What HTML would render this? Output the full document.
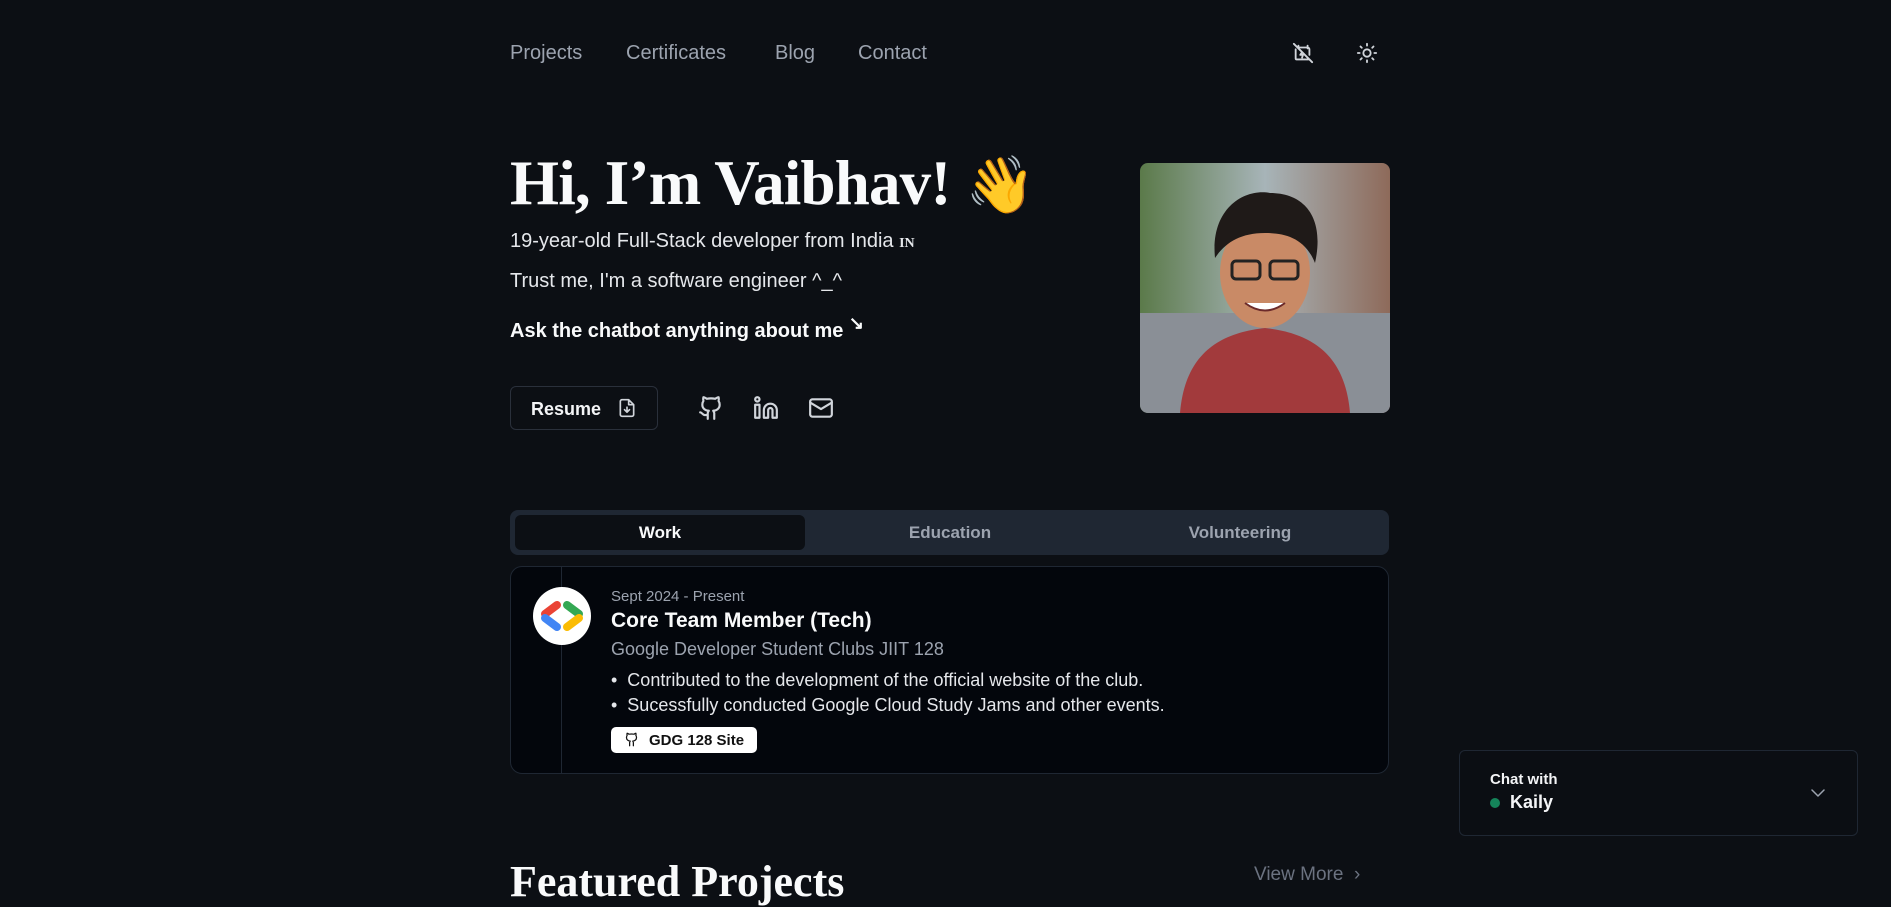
<!DOCTYPE html>
<html><head><meta charset="utf-8"><style>
*{margin:0;padding:0;box-sizing:border-box}
body{width:1891px;height:875px;overflow:hidden;background:#0c0f14;font-family:"Liberation Sans",sans-serif;color:#f3f4f6;position:relative}
.a{position:absolute}
.nav a{position:absolute;top:42px;font-size:20px;color:#9ca3af;text-decoration:none}
h1{position:absolute;left:510px;top:140px;font-family:"Liberation Serif",serif;font-weight:bold;font-size:63px;letter-spacing:-0.8px;color:#f9fafb;white-space:nowrap}
.t{position:absolute;left:510px;font-size:20px;color:#e5e7eb;white-space:nowrap}
svg.i{position:absolute;fill:none;stroke:#d1d5db;stroke-width:2;stroke-linecap:round;stroke-linejoin:round}
</style></head><body>
<div class="nav">
<a style="left:510px">Projects</a><a style="left:626px">Certificates</a><a style="left:775px">Blog</a><a style="left:858px">Contact</a>
</div>
<svg class="i" style="left:1292px;top:42px" width="22" height="22" viewBox="0 0 24 24" stroke="#e5e7eb"><path d="M2 2l20 20M8 6h9a2 2 0 0 1 2 2v6M4 8v10a1 1 0 0 0 1 1h13M7 4v3M17 4v3M11 11l-2 3h3l-1 3"/></svg>
<svg class="i" style="left:1356px;top:42px" width="22" height="22" viewBox="0 0 24 24" stroke="#e5e7eb"><circle cx="12" cy="12" r="4"/><path d="M12 2v2M12 20v2M4.9 4.9l1.4 1.4M17.7 17.7l1.4 1.4M2 12h2M20 12h2M4.9 19.1l1.4-1.4M17.7 6.3l1.4-1.4"/></svg>
<h1>Hi, I’m Vaibhav! <span style="font-family:'Noto Sans CJK JP',sans-serif;font-size:56px">👋</span></h1>
<div class="t" style="top:230px">19-year-old Full-Stack developer from India <b style="font-size:14px;font-family:'Liberation Serif',serif">IN</b></div>
<div class="t" style="top:270px">Trust me, I'm a software engineer ^_^</div>
<div class="t" style="top:320px;font-weight:bold;color:#f9fafb">Ask the chatbot anything about me <span style="font-size:18px;position:relative;top:-8px">↘</span></div>
<div class="a" style="left:510px;top:386px;width:148px;height:44px;border:1px solid #2a303b;border-radius:6px;font-size:18px;font-weight:bold;padding:12px 0 0 20px">Resume</div>
<svg class="i" style="left:617px;top:397px" width="20" height="22" viewBox="0 0 24 24"><path d="M14 2H6a2 2 0 0 0-2 2v16a2 2 0 0 0 2 2h12a2 2 0 0 0 2-2V8z M14 2v6h6M12 11v6M9 14l3 3 3-3"/></svg>
<svg class="i" style="left:698px;top:395px" width="26" height="26" viewBox="0 0 24 24"><path d="M15 22v-4a4.8 4.8 0 0 0-1-3.5c3 0 6-2 6-5.5.08-1.25-.27-2.48-1-3.5.28-1.150.28-2.35 0-3.5 0 0-1 0-3 1.5-2.64-.5-5.36-.5-8 0C6 2 5 2 5 2c-.3 1.15-.3 2.35 0 3.5A5.4 5.4 0 0 0 4 9c0 3.5 3 5.5 6 5.5-.39.49-.68 1.05-.85 1.65-.17.6-.22 1.23-.15 1.850v4M9 18c-4.5 2-5-2-7-2"/></svg>
<svg class="i" style="left:753px;top:395px" width="26" height="26" viewBox="0 0 24 24"><path d="M16 8a6 6 0 0 1 6 6v7h-4v-7a2 2 0 0 0-4 0v7h-4v-7a6 6 0 0 1 6-6zM2 9h4v12H2z"/><circle cx="4" cy="4" r="2"/></svg>
<svg class="i" style="left:808px;top:395px" width="26" height="26" viewBox="0 0 24 24"><rect x="2" y="4" width="20" height="16" rx="2"/><path d="M22 7l-10 6L2 7"/></svg>
<svg class="a" style="left:1140px;top:163px;border-radius:8px" width="250" height="250" viewBox="0 0 250 250">
<defs><linearGradient id="bg" x1="0" x2="1"><stop offset="0" stop-color="#5b7a4a"/><stop offset=".5" stop-color="#a7b4b8"/><stop offset="1" stop-color="#8e6a5a"/></linearGradient></defs>
<rect width="250" height="250" fill="url(#bg)"/><rect x="0" y="150" width="250" height="100" fill="#8a8f96"/>
<path d="M40 250c5-60 40-80 85-85 45 5 80 25 85 85z" fill="#a23a3c"/>
<ellipse cx="125" cy="110" rx="45" ry="55" fill="#c98a66"/>
<path d="M75 95c-5-50 30-70 55-65 35 0 55 25 45 70-10-25-30-30-50-30-25 0-40 10-50 25z" fill="#1f1a18"/>
<rect x="92" y="98" width="28" height="18" rx="4" fill="none" stroke="#222" stroke-width="3"/><rect x="130" y="98" width="28" height="18" rx="4" fill="none" stroke="#222" stroke-width="3"/>
<path d="M105 140q20 15 40 0" fill="#fff" stroke="#6b2a2a" stroke-width="2"/>
</svg>
<div class="a" style="left:510px;top:510px;width:879px;height:45px;background:#1f2733;border-radius:8px"></div>
<div class="a" style="left:515px;top:515px;width:290px;height:35px;background:#0c0f14;border-radius:6px"></div>
<div class="a" style="left:515px;top:523px;width:290px;text-align:center;font-size:17px;font-weight:bold;color:#f9fafb">Work</div>
<div class="a" style="left:805px;top:523px;width:290px;text-align:center;font-size:17px;font-weight:bold;color:#9ca3af">Education</div>
<div class="a" style="left:1095px;top:523px;width:290px;text-align:center;font-size:17px;font-weight:bold;color:#9ca3af">Volunteering</div>
<div class="a" style="left:510px;top:566px;width:879px;height:208px;border:1px solid #1f2733;border-radius:12px;background:#03060c"></div>
<div class="a" style="left:561px;top:567px;width:1px;height:206px;background:#1f2733"></div>
<svg class="a" style="left:532px;top:586px" width="60" height="60" viewBox="0 0 60 60"><circle cx="30" cy="30" r="29" fill="#fff"/>
<g stroke-width="8" stroke-linecap="round"><path d="M25 19l-12 9" stroke="#ea4335"/><path d="M13 32l12 9" stroke="#4285f4"/><path d="M35 19l12 9" stroke="#34a853"/><path d="M47 32l-12 9" stroke="#fbbc04"/></g></svg>
<div class="a" style="left:611px;top:588px;font-size:15px;color:#9ca3af">Sept 2024 - Present</div>
<div class="a" style="left:611px;top:609px;font-size:21px;font-weight:bold;color:#f9fafb">Core Team Member (Tech)</div>
<div class="a" style="left:611px;top:639px;font-size:18px;color:#9ca3af">Google Developer Student Clubs JIIT 128</div>
<div class="a" style="left:611px;top:668px;font-size:18px;color:#e5e7eb;line-height:25px">• &nbsp;Contributed to the development of the official website of the club.<br>• &nbsp;Sucessfully conducted Google Cloud Study Jams and other events.</div>
<div class="a" style="left:611px;top:727px;width:146px;height:26px;background:#fff;border-radius:5px;color:#111;font-size:15px;font-weight:bold;padding:5px 0 0 38px">GDG 128 Site</div>
<svg class="i" style="left:624px;top:732px;stroke:#111" width="15" height="15" viewBox="0 0 24 24"><path d="M15 22v-4a4.8 4.8 0 0 0-1-3.5c3 0 6-2 6-5.5.08-1.25-.27-2.48-1-3.5.28-1.15.28-2.35 0-3.5 0 0-1 0-3 1.5-2.64-.5-5.36-.5-8 0C6 2 5 2 5 2c-.3 1.15-.3 2.35 0 3.5A5.4 5.4 0 0 0 4 9c0 3.5 3 5.5 6 5.5-.39.49-.68 1.05-.85 1.65-.17.6-.22 1.23-.15 1.85v4"/></svg>
<div class="a" style="left:510px;top:856px;font-family:'Liberation Serif',serif;font-weight:bold;font-size:44px;color:#f9fafb">Featured Projects</div>
<div class="a" style="left:1254px;top:864px;font-size:19px;color:#6b7280">View More &nbsp;›</div>
<div class="a" style="left:1459px;top:750px;width:399px;height:86px;border:1px solid #1f2733;border-radius:6px;background:#0b0e13"></div>
<div class="a" style="left:1490px;top:771px;font-size:15px;font-weight:bold;color:#f3f4f6">Chat with</div>
<div class="a" style="left:1490px;top:798px;width:10px;height:10px;border-radius:50%;background:#15845a"></div>
<div class="a" style="left:1510px;top:792px;font-size:18px;font-weight:bold;color:#f3f4f6">Kaily</div>
<svg class="i" style="left:1811px;top:788px;stroke:#9ca3af;stroke-width:1.5" width="14" height="10" viewBox="0 0 14 10"><path d="M1 2l6 6 6-6"/></svg>
</body></html>
